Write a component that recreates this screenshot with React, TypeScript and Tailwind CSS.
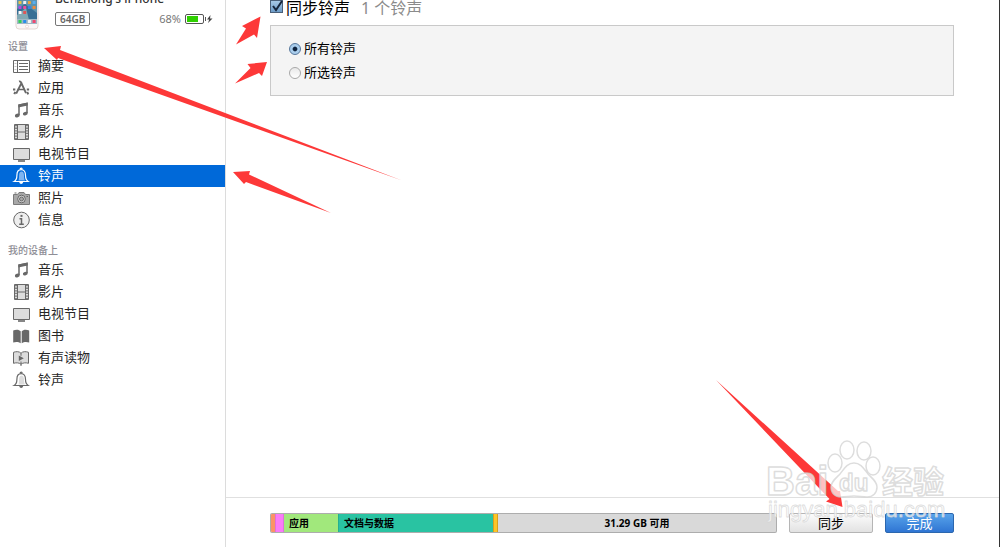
import React from 'react';

type IconName = 'summary' | 'apps' | 'music' | 'film' | 'tv' | 'bell' | 'camera' | 'info' | 'book' | 'audiobook';

function Icon({ name, active = false }: { name: IconName; active?: boolean }) {
  const c = active ? '#ffffff' : '#686868';
  const fill = active ? '#7fb4f0' : '#dcdcdc';
  return (
    <svg viewBox="0 0 18 18" className="size-[18px] shrink-0" fill="none" stroke={c} strokeWidth="1" aria-hidden="true">
      {name === 'summary' && (
        <>
          <path d="M1.5 3.5h16v12h-16zM5.5 3.5v12M7 6.5h9M7 9.5h9M7 12.5h9" />
          <path d="M2.5 6.5h2M2.5 9.5h2M2.5 12.5h2" strokeOpacity=".4" />
        </>
      )}
      {name === 'apps' && (
        <>
          <path d="M7 2.5c1.3-.4 2 .6 2.4 1.6l4.6 10M9.8 3.3L4.2 14.6" strokeWidth="1.9" />
          <path d="M5.5 10.5h7" strokeWidth="1.5" />
          <path d="M1 10.5h2.3M14.8 10.5h2.3M3.3 12.8l-1 2.4M15.2 13l1 2.4" strokeWidth="2" />
        </>
      )}
      {name === 'music' && (
        <>
          <path d="M7 14V4l8-1.5V12" strokeWidth="1.5" />
          <path d="M6.3 3.4l9.4-2v3l-9.4 2z" fill={c} stroke="none" />
          <ellipse cx="5.3" cy="14.5" rx="2.5" ry="1.8" fill={c} stroke="none" transform="rotate(-18 5.3 14.5)" />
          <ellipse cx="13.3" cy="12.6" rx="2.5" ry="1.8" fill={c} stroke="none" transform="rotate(-18 13.3 12.6)" />
        </>
      )}
      {name === 'film' && (
        <>
          <path d="M2.5 1.5h14v15h-14z" fill={fill} />
          <path d="M5.5 1.5v15M13.5 1.5v15M5.5 9h8" />
          <path d="M4 2v14M15 2v14" strokeWidth="2" strokeDasharray="1.3 1.3" strokeOpacity=".8" />
        </>
      )}
      {name === 'tv' && (
        <>
          <path d="M1.5 3.5h16v11h-16z" fill={fill} />
          <path d="M6 16h7" strokeWidth="1.6" />
        </>
      )}
      {name === 'bell' && (
        <>
          <path d="M2.2 14.5c2-1.2 2.7-2.6 2.7-6.2 0-3.4 1.7-5.6 4.3-5.6s4.3 2.2 4.3 5.6c0 3.6.7 5 2.7 6.2z" strokeWidth="1.2" />
          <path d="M6.5 13.5c.6-2 .5-3.6.6-5.6.1-2 .9-3.5 2.4-3.5 1.7 0 2.5 1.5 2.5 4 0 2.3.2 3.6 1 5.1z" fill={fill} stroke="none" />
          <path d="M8.2 2.2c0-1.5 2-1.5 2 0" strokeWidth="1.2" />
          <path d="M7.2 15h4c-.4 2.6-3.6 2.6-4 0z" fill={c} stroke="none" />
        </>
      )}
      {name === 'camera' && (
        <>
          <path d="M1.5 5.500h4l1.500-2h5l1.500 2h4v10h-16z" fill="#a8a8a8" stroke="#7a7a7a" />
          <circle cx="9.5" cy="10" r="3.8" fill={fill} />
          <circle cx="9.5" cy="10" r="2" fill="#a8a8a8" />
          <path d="M2.5 4h2M14.500 7.500h1.500" />
        </>
      )}
      {name === 'info' && (
        <>
          <circle cx="9.500" cy="9" r="7.800" fill="#eeeeee" />
          <path d="M9.500 3.900v2" strokeWidth="2" />
          <path d="M7.500 7.700h2v5.600M7.200 13.300h4.600" strokeWidth="1.500" />
        </>
      )}
      {name === 'book' && (
        <path
          d="M8.700 4.300C7.200 2.300 3.700 2.300 1.200 3.500v12c2.500-.9 5.500-.8 7.500.8zM9.700 4.300c1.500-2 5-2 7.500-.8v12c-2.500-.9-5.500-.8-7.500.8z"
          fill={c}
          stroke="none"
        />
      )}
      {name === 'audiobook' && (
        <>
          <path d="M9 4.300C7.500 2.300 4 2.300 1.500 3.300v11c2.500-.8 5.500-.7 7.500.9 2-1.600 5-1.700 7.500-.9v-11C14 2.300 10.500 2.300 9 4.300z" fill={fill} />
          <path d="M9 4.300v2.500M9 12.500v4.500" />
          <path d="M6.800 6.500l5 2.800-5 2.800z" fill={c} stroke="none" />
        </>
      )}
    </svg>
  );
}

type Entry = { icon: IconName; label: string; active?: boolean };

const settings: Entry[] = [
  { icon: 'summary', label: '摘要' },
  { icon: 'apps', label: '应用' },
  { icon: 'music', label: '音乐' },
  { icon: 'film', label: '影片' },
  { icon: 'tv', label: '电视节目' },
  { icon: 'bell', label: '铃声', active: true },
  { icon: 'camera', label: '照片' },
  { icon: 'info', label: '信息' },
];

const onDevice: Entry[] = [
  { icon: 'music', label: '音乐' },
  { icon: 'film', label: '影片' },
  { icon: 'tv', label: '电视节目' },
  { icon: 'book', label: '图书' },
  { icon: 'audiobook', label: '有声读物' },
  { icon: 'bell', label: '铃声' },
];

function Section({ title, items }: { title: string; items: Entry[] }) {
  return (
    <section>
      <h2 className="pl-2 text-[10px] leading-[18px] font-medium text-[#8e8e96]">{title}</h2>
      <ul>
        {items.map((item) => (
          <li key={item.label}>
            <a
              href="#"
              className={
                item.active
                  ? 'flex h-[22px] items-center gap-2 bg-[#0069d9] pl-3 text-[13px] text-white'
                  : 'flex h-[22px] items-center gap-2 pl-3 text-[13px] text-[#262626]'
              }
            >
              <Icon name={item.icon} active={item.active} />
              {item.label}
            </a>
          </li>
        ))}
      </ul>
    </section>
  );
}

function Phone() {
  const apps = ['#e8c34a', '#f2f2f2', '#e9a33b', '#58aef0', '#b14ae0', '#ef4c9b', '#3b82e0', '#f08a3a', '#fafafa', '#e05555'];
  return (
    <svg viewBox="0 0 24 48" className="h-12 w-6 shrink-0" aria-hidden="true">
      <rect x="1" y="1" width="22" height="46" rx="3" fill="#fbf7f6" stroke="#e3d5d2" />
      <rect x="2" y="7" width="20" height="35" fill="#5d93ae" />
      <path d="M2 27l8-5 12 9v11H2z" fill="#386f94" />
      <path d="M2 33l9-7 4 16H2z" fill="#81a9b4" />
      {apps.map((color, i) => (
        <rect key={i} x={3.5 + (i % 4) * 4.7} y={19 + Math.floor(i / 4) * 5} width="3" height="3" rx=".6" fill={color} />
      ))}
      <rect x="2" y="37" width="20" height="5" fill="#9fb8c5" />
      <rect x="3.5" y="38" width="3" height="3" fill="#35cf55" />
      <rect x="8.2" y="38" width="3" height="3" fill="#2a8ee9" />
      <rect x="12.9" y="38" width="3" height="3" fill="#f4f4f4" />
      <rect x="17.6" y="38" width="3" height="3" fill="#f04770" />
      <circle cx="12" cy="44.5" r="1.5" fill="#fff" stroke="#e2c9c5" strokeWidth=".6" />
    </svg>
  );
}

function Device() {
  return (
    <header className="flex h-[30px] items-end gap-4 overflow-hidden pr-3 pl-[15px]">
      <Phone />
      <div className="min-w-0 flex-1 pb-1">
        <div className="text-[12px] leading-[18px] font-medium text-[#333]">Benzhong's iPhone</div>
        <div className="flex items-center justify-between pt-1">
          <span className="rounded-xs border border-[#777] px-1 text-[10px] leading-[12px] font-semibold text-[#666]">64GB</span>
          <span className="flex items-center gap-1 text-[11px] leading-[14px] text-[#777]">
            68%
            <svg viewBox="0 0 28 10" className="h-[10px] w-7" aria-hidden="true">
              <rect x=".5" y=".5" width="18" height="9" rx="1.5" fill="#fff" stroke="#555" />
              <rect x="2" y="2" width="11" height="6" fill="#2fd000" />
              <path d="M20.5 3v4" stroke="#555" />
              <path d="M25.5 1L22 5.5h2.200L23 9l4.500-4.500H25z" fill="#444" />
            </svg>
          </span>
        </div>
      </div>
    </header>
  );
}

function Arrows() {
  return (
    <svg width="1000" height="547" className="pointer-events-none absolute top-0 left-0" fill="#fd3838" aria-hidden="true">
      <path d="M44 48L61 46 60 50 402 180.500 58 58 57 60z" />
      <path d="M260.500 16.500L242 26 246 28.500 236 44.500 254 34.500 257 38z" />
      <path d="M267 62L247.500 64 250.500 68 235 83.500 259 73 262 76z" />
      <path d="M233 172L250 171 249 174.500 331 213 246 182 244 184z" />
      <path d="M716 380L838 491 840 491 842.500 507 826 501.500 829.500 499z" />
    </svg>
  );
}

function Watermark() {
  return (
    <svg
      viewBox="0 0 190 96"
      className="pointer-events-none absolute right-[50px] bottom-[16px] h-24 w-[190px] font-['Liberation_Sans','Noto_Sans_CJK_SC',sans-serif]"
      fill="#ffffff"
      fillOpacity=".7"
      stroke="#d2d2d2"
      strokeOpacity=".75"
      strokeWidth="1.5"
      strokeLinejoin="round"
      aria-hidden="true"
    >
      <text x="6" y="60" fontSize="40" fontWeight="700">Bai</text>
      <path d="M94 28c7 0 10 6 14 11 5 5 9 8 9 13 0 6-4 10-10 10-5 0-8-1-13-1s-8 1-13 1c-6 0-10-4-10-10 0-5 4-8 9-13 4-5 7-11 14-11z" />
      <ellipse cx="75" cy="28" rx="7" ry="9" />
      <ellipse cx="87" cy="15" rx="7" ry="9" />
      <ellipse cx="104" cy="16" rx="7" ry="9" />
      <ellipse cx="113" cy="31" rx="7" ry="9" />
      <text x="79" y="56" fontSize="24" fontWeight="700">du</text>
      <text x="122" y="58" fontSize="31" fontWeight="700">经验</text>
      <text x="8" y="82" fontSize="22" strokeWidth=".8">jingyan.baidu.com</text>
    </svg>
  );
}

export default function App() {
  return (
    <div className="relative flex min-h-screen overflow-hidden bg-white font-['Noto_Sans','Noto_Sans_CJK_SC',sans-serif] text-black">
      <aside className="w-[226px] shrink-0 border-r border-[#dcdcdc]">
        <Device />
        <nav className="flex flex-col gap-[10px] pt-[7px]">
          <Section title="设置" items={settings} />
          <Section title="我的设备上" items={onDevice} />
        </nav>
      </aside>

      <div className="flex min-w-0 flex-1 flex-col border-r border-[#333]">
        <main className="flex-1 pr-[45px] pl-11">
          <div className="-mt-1 flex h-[29px] items-start gap-[11px] text-[16px] leading-6">
            <label className="flex items-start gap-[3px]">
              <span className="relative flex pt-1">
                <input
                  type="checkbox"
                  defaultChecked
                  className="peer size-[13px] appearance-none border border-[#4a6079] bg-linear-to-b from-[#a6c8e6] to-[#6d9cc8]"
                />
                <svg viewBox="0 0 13 13" className="pointer-events-none absolute bottom-0 left-0 hidden size-[13px] peer-checked:block" fill="none" stroke="#16263c" strokeWidth="2" aria-hidden="true">
                  <path d="M3 6l3 4 6-9" />
                </svg>
              </span>
              同步铃声
            </label>
            <span className="text-[#8b8b8b]">1 个铃声</span>
          </div>
          <fieldset className="flex flex-col gap-1 border border-[#c9c9c9] bg-[#f4f4f4] px-[18px] pt-[13px] pb-3">
            {['所有铃声', '所选铃声'].map((label, i) => (
              <label key={label} className="flex h-5 items-center gap-[3px] text-[13px]">
                <input
                  type="radio"
                  name="scope"
                  defaultChecked={i === 0}
                  className="size-3 appearance-none rounded-full border border-[#a8a8a8] bg-linear-to-b from-[#e9e9e9] to-white checked:border-[#56779c] checked:bg-radial checked:from-[#10243e] checked:from-25% checked:to-[#a9cdec] checked:to-40%"
                />
                {label}
              </label>
            ))}
          </fieldset>
        </main>

        <footer className="flex h-[50px] items-center gap-3 border-t border-[#e0e0e0] pr-[45px] pl-11">
          <div className="flex h-5 min-w-0 flex-1 overflow-hidden rounded-xs border border-black/20 bg-[#d9d9d9] text-[10px] leading-[18px] font-bold">
            <div className="w-1 bg-[#fb9367]" />
            <div className="w-[9px] border-x border-black/10 bg-[#f97cf8]" />
            <div className="w-[54px] bg-[#a1e87c] pl-[5px]">应用</div>
            <div className="w-[155px] border-l border-black/10 bg-[#29c3a2] pl-[5px]">文档与数据</div>
            <div className="w-[5px] border-x border-[#d9a01c] bg-[#fdc526]" />
            <div className="flex-1 text-center">31.29 GB 可用</div>
          </div>
          <button type="button" className="h-5 w-[84px] rounded-xs border border-[#b5b5b5] bg-linear-to-b from-[#fcfcfc] to-[#e2e2e2] text-[13px] leading-[18px]">
            同步
          </button>
          <button type="button" className="h-5 w-[69px] rounded-xs border border-[#2c67ae] bg-linear-to-b from-[#58a3ea] to-[#2f75d3] text-[13px] leading-[18px] text-white">
            完成
          </button>
        </footer>
      </div>

      <Arrows />
      <Watermark />
    </div>
  );
}
